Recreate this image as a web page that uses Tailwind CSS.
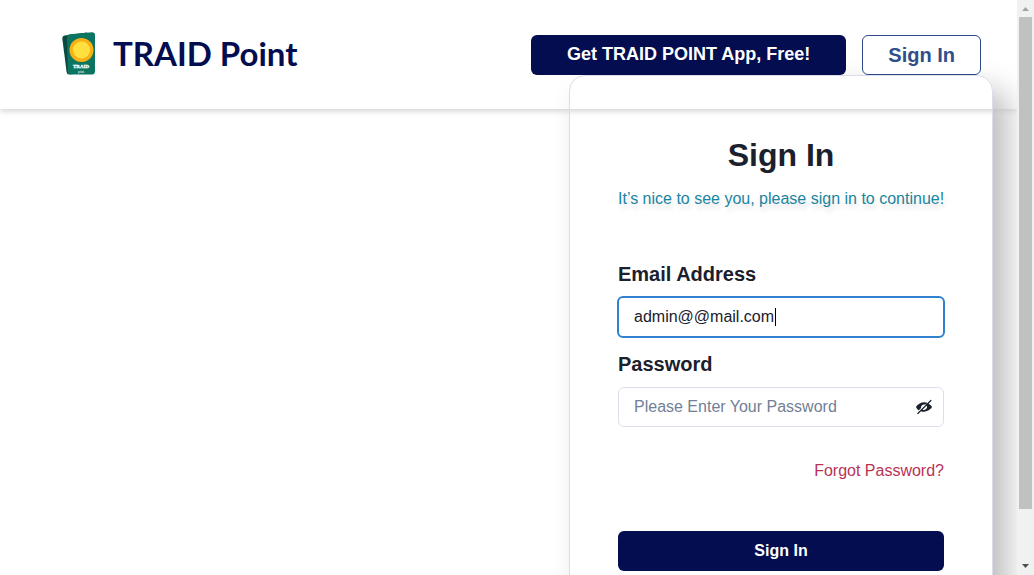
<!DOCTYPE html>
<html lang="en">
<head>
<meta charset="utf-8">
<meta name="viewport" content="width=device-width, initial-scale=1">
<title>TRAID Point – Sign In</title>
<script src="https://cdn.jsdelivr.net/npm/@tailwindcss/browser@4"></script>
</head>
<body class="flex h-screen overflow-hidden bg-white font-['Liberation_Sans',Arial,sans-serif] text-[#1a202c]">
<div class="min-w-0 flex-1 overflow-hidden">
  <header class="flex items-center justify-between pt-[30px] pb-[30px] pl-[61px] pr-9 shadow-[0_2px_6px_rgba(0,0,0,0.18)]">
    <a href="#" class="flex items-center gap-[17px]">
      <svg class="h-[49px] w-[35px]" viewBox="0 0 35 49" aria-hidden="true">
        <path d="M3.500 5.500 26 2.500 30 42 8 44.500Q6 44.500 5.600 42L1.300 8.500Q1.100 6 3.500 5.500Z" fill="#0b4a3f"/>
        <path d="M9 4.200 31 2.200Q34 2.200 34 5V41Q34 44.500 31 44.500H9.500Q7 44.500 6.800 42L6 7.500Q6 4.500 9 4.200Z" fill="#0c7561"/>
        <circle cx="20.500" cy="20" r="12" fill="#f9b115"/>
        <circle cx="20.500" cy="20" r="8.500" fill="#ffe03f"/>
        <text x="20" y="38" text-anchor="middle" font-family="Liberation Serif, serif" font-weight="700" font-size="5" fill="#fff" stroke="#fff" stroke-width="0.300">TRAID</text>
        <text x="20" y="43" text-anchor="middle" font-family="Liberation Serif, serif" font-size="3" fill="#fff">point</text>
      </svg>
      <span class="pb-1 font-[Lato,sans-serif] text-[33px] leading-10 font-bold text-[#030d4f]">TRAID Point</span>
    </a>
    <nav class="flex items-center gap-4">
      <button class="relative z-10 h-10 rounded-md bg-[#030d4f] px-9 pb-0.5 text-lg leading-5 font-bold whitespace-nowrap text-white">Get TRAID POINT App, Free!</button>
      <button class="relative z-10 h-10 rounded-md border border-[#2a4b87] bg-white px-[25px] text-xl leading-5 font-bold whitespace-nowrap text-[#2f4f8b]">Sign In</button>
    </nav>
  </header>
  <main class="relative -mt-[34px] flex justify-end pr-6">
    <form class="flex w-full max-w-[424px] flex-col rounded-[16px] border border-[#dcdcea] px-12 pt-[55px] pb-16 shadow-[15px_15px_30px_#bebebe]">
      <h1 class="text-center text-[32px] leading-12 font-bold">Sign In</h1>
      <p class="mt-2 text-center leading-6 whitespace-nowrap text-[#1a85a0] [text-shadow:2px_5px_5px_rgba(0,0,50,0.12)]">It’s nice to see you, please sign in to continue!</p>
      <label for="email" class="mt-[47px] text-xl leading-8 font-bold">Email Address</label>
      <div class="relative -mx-px mt-1.5 flex">
        <input id="email" type="text" value="admin@@mail.com" class="h-[42px] w-full rounded-md border-2 border-[#3182ce] px-[15px] text-base outline-none">
        <span class="pointer-events-none absolute top-3 left-[158px] h-[18px] w-px bg-black" aria-hidden="true"></span>
      </div>
      <label for="password" class="mt-2.5 text-xl leading-8 font-bold">Password</label>
      <div class="mt-[7px] flex h-10 items-center rounded-md border border-[#dedeea]">
        <input id="password" type="password" placeholder="Please Enter Your Password" class="h-full min-w-0 flex-1 pl-[15px] text-base outline-none placeholder:text-[#718096]">
        <button type="button" aria-label="Show password" class="mr-[11px]">
          <svg class="size-4" viewBox="0 0 24 24" fill="#1a202c" aria-hidden="true">
            <path d="M23.200 10.549a20.954 20.954 0 0 0-4.300-3.600l4-3.995a1 1 0 1 0-1.414-1.414l-.018.018a.737.737 0 0 1-.173.291l-19.500 19.400c-.008.007-.018.009-.026.017a1 1 0 0 0 1.631 1.088l4.146-4.146a11.260 11.260 0 0 0 4.310.800h.256c3.969 0 8.962-2.979 11.062-5.558a2.249 2.249 0 0 0 .026-2.901ZM16.313 13.270a4.581 4.581 0 0 1-3 3.028 4.300 4.300 0 0 1-3.100-.190.253.253 0 0 1-.068-.407l5.560-5.559a.252.252 0 0 1 .407.067 4.300 4.300 0 0 1 .201 3.061Z"/>
            <path d="M7.615 13.400a.244.244 0 0 1-.061.240L4.315 16.884a.5.500 0 0 1-.644.059 18.664 18.664 0 0 1-2.884-3.490 2.270 2.270 0 0 1 0-2.907c2.100-2.579 7.082-5.500 11.064-5.546h.320a10.200 10.200 0 0 1 4.199.800.5.5 0 0 1 .146.813L13.847 8.370a.244.244 0 0 1-.240.061A4.500 4.500 0 0 0 7.615 13.400Z"/>
          </svg>
        </button>
      </div>
      <a href="#" class="mt-8 self-end leading-6 text-[#b83256]">Forgot Password?</a>
      <button type="submit" class="mt-12 h-10 rounded-md bg-[#030d4f] font-bold text-white">Sign In</button>
    </form>
  </main>
</div>
<div class="flex w-[17px] shrink-0 flex-col items-center justify-between bg-[#f1f1f1]" aria-hidden="true">
  <svg class="size-[17px]" viewBox="0 0 17 17"><path d="M5 11h7L8.500 7Z" fill="#a3a3a3"/></svg>
  <div class="mb-auto h-[492px] w-[13px] bg-[#c1c1c1]"></div>
  <svg class="size-[17px]" viewBox="0 0 17 17"><path d="M5 6h7l-3.500 4Z" fill="#505050"/></svg>
</div>
</body>
</html>
